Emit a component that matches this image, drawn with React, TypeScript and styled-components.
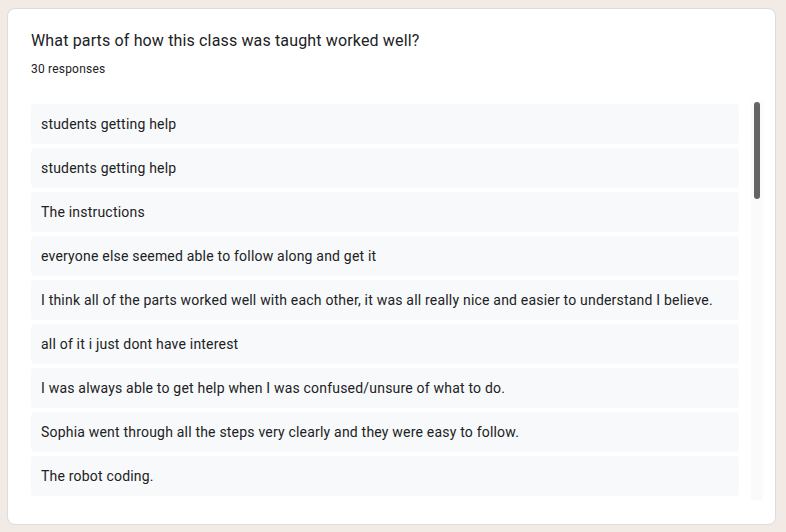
import React from "react";
import styled, { createGlobalStyle } from "styled-components";

const GlobalStyle = createGlobalStyle`
  html, body {
    margin: 0;
    padding: 0;
    background: #f2eae5;
    font-family: Roboto, "Noto Sans", Arial, sans-serif;
  }
`;

const Page = styled.div`
  padding: 8px 10px 7px 7px;
  box-sizing: border-box;
  width: 786px;
  height: 532px;
`;

const Card = styled.section`
  box-sizing: border-box;
  width: 769px;
  height: 517px;
  background: #fff;
  border: 1px solid #dadce0;
  border-radius: 8px;
  padding: 20px 12px 0 23px;
  display: flex;
  flex-direction: column;
`;

const Title = styled.h2`
  margin: 0;
  font-size: 16px;
  line-height: 24px;
  font-weight: 400;
  color: #202124;
  letter-spacing: 0.15px;
`;

const Count = styled.div`
  margin-top: 8px;
  font-size: 12px;
  line-height: 16px;
  color: #202124;
  letter-spacing: 0.2px;
`;

const ListArea = styled.div`
  margin-top: 27px;
  height: 396px;
  display: flex;
  gap: 12px;
`;

const List = styled.div`
  flex: 1;
  overflow: hidden;
  display: flex;
  flex-direction: column;
  gap: 4px;
`;

const ScrollTrack = styled.div`
  flex: none;
  width: 12px;
  margin-top: -3px;
  height: 399px;
  background: #fafafa;
  display: flex;
  justify-content: center;
`;

const ScrollThumb = styled.div`
  margin-top: 1px;
  width: 6px;
  height: 97px;
  border-radius: 3px;
  background: #646464;
`;

const Item = styled.div`
  flex: none;
  background: #f8f9fa;
  border-radius: 4px;
  padding: 10px;
  font-size: 14px;
  line-height: 20px;
  color: #202124;
  letter-spacing: 0.2px;
`;

const responses = [
  "students getting help",
  "students getting help",
  "The instructions",
  "everyone else seemed able to follow along and get it",
  "I think all of the parts worked well with each other, it was all really nice and easier to understand I believe.",
  "all of it i just dont have interest",
  "I was always able to get help when I was confused/unsure of what to do.",
  "Sophia went through all the steps very clearly and they were easy to follow.",
  "The robot coding.",
];

export default function App() {
  return (
    <>
      <GlobalStyle />
      <Page>
        <Card>
          <Title>What parts of how this class was taught worked well?</Title>
          <Count>30 responses</Count>
          <ListArea>
            <List>
              {responses.map((r, i) => (
                <Item key={i}>{r}</Item>
              ))}
            </List>
            <ScrollTrack>
              <ScrollThumb />
            </ScrollTrack>
          </ListArea>
        </Card>
      </Page>
    </>
  );
}
